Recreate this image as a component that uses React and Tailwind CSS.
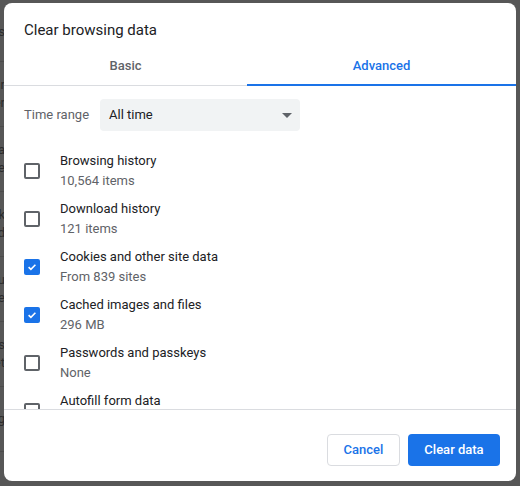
import React from "react";

const rows = [
  { title: "Browsing history", sub: "10,564 items", checked: false },
  { title: "Download history", sub: "121 items", checked: false },
  { title: "Cookies and other site data", sub: "From 839 sites", checked: true },
  { title: "Cached images and files", sub: "296 MB", checked: true },
  { title: "Passwords and passkeys", sub: "None", checked: false },
  { title: "Autofill form data", sub: "", checked: false },
];

const backRows = [
  ["Settings"],
  ["Clear", "Cookies per"],
  ["Data", "Site data de"],
  ["Clear desk", "Delete and"],
  ["Pleasu", "Remove bye"],
  ["Sessions", "Default set"],
  ["Closing"],
];

function Checkbox({ checked }) {
  if (checked) {
    return (
      <div className="w-4 h-4 rounded-[2px] bg-[#1a73e8] flex items-center justify-center shrink-0">
        <svg width="12" height="12" viewBox="0 0 12 12">
          <path d="M2.6 6.2 L4.9 8.4 L9.4 3.8" fill="none" stroke="white" strokeWidth="1.6" />
        </svg>
      </div>
    );
  }
  return <div className="w-4 h-4 rounded-[2px] border-2 border-[#5f6368] shrink-0" />;
}

export default function App() {
  return (
    <div
      className="relative w-[520px] h-[486px] overflow-hidden bg-[#575757]"
      style={{ fontFamily: "Roboto, 'Liberation Sans', sans-serif" }}
    >
      {/* dimmed page behind */}
      <div className="flex flex-col w-[5px] pt-[-0px]">
        <div className="h-[62px] border-b border-[#4b4b4b] flex flex-col justify-center overflow-hidden">
          <div className="flex justify-end whitespace-nowrap text-[13px] text-[#2c2c2c] leading-[18px] pt-[2px]">Settings</div>
        </div>
        {backRows.slice(1).map((r, i) => (
          <div key={i} className="h-[65px] border-b border-[#4b4b4b] flex flex-col justify-center overflow-hidden">
            {r.map((t, j) => (
              <div key={j} className="flex justify-end whitespace-nowrap text-[13px] text-[#2c2c2c] leading-[18px]">
                {t}
              </div>
            ))}
          </div>
        ))}
      </div>

      {/* dialog */}
      <div className="absolute left-[4px] top-[3px] w-[512px] h-[478px] bg-white rounded-[8px] flex flex-col overflow-hidden">
        <div className="pt-[17px] pl-[20px] text-[15px] leading-[20px] text-[#202124]">Clear browsing data</div>

        <div className="mt-[7px] flex border-b border-[#dadce0]">
          <div className="w-[243px] h-[38px] flex items-center justify-center text-[13px] font-medium text-[#5f6368]">
            Basic
          </div>
          <div className="flex-1 h-[39px] -mb-px flex items-center justify-center text-[13px] font-medium text-[#1a73e8] border-b-2 border-[#1a73e8] pt-[1px]">
            Advanced
          </div>
        </div>

        <div className="h-[323px] overflow-hidden px-[20px] pt-[13px]">
          <div className="flex items-center h-[32px]">
            <div className="w-[76px] text-[13px] text-[#5f6368]">Time range</div>
            <div className="w-[200px] h-[32px] rounded-[4px] bg-[#f1f3f4] flex items-center justify-between pl-[9px] pr-[8px]">
              <span className="text-[13px] text-[#202124]">All time</span>
              <svg width="10" height="5" viewBox="0 0 10 5">
                <path d="M0 0 L10 0 L5 5 Z" fill="#5f6368" />
              </svg>
            </div>
          </div>
          <div className="mt-[16px] flex flex-col">
            {rows.map((r, i) => (
              <div key={i} className="h-[48px] flex items-center shrink-0">
                <Checkbox checked={r.checked} />
                <div className="ml-[20px] flex flex-col">
                  <div className="text-[13px] leading-[20px] text-[#202124]">{r.title}</div>
                  <div className="text-[13px] leading-[20px] text-[#5f6368]">{r.sub || "\u00a0"}</div>
                </div>
              </div>
            ))}
          </div>
        </div>

        <div className="border-t border-[#dadce0] flex justify-end gap-[8px] pt-[24px] pb-[15px] pr-[16px]">
          <button className="w-[73px] h-[32px] rounded-[4px] border border-[#dadce0] bg-white text-[13px] font-medium text-[#1a73e8]">
            Cancel
          </button>
          <button className="w-[92px] h-[32px] rounded-[4px] bg-[#1a73e8] text-[13px] font-medium text-white">
            Clear data
          </button>
        </div>
      </div>
    </div>
  );
}
